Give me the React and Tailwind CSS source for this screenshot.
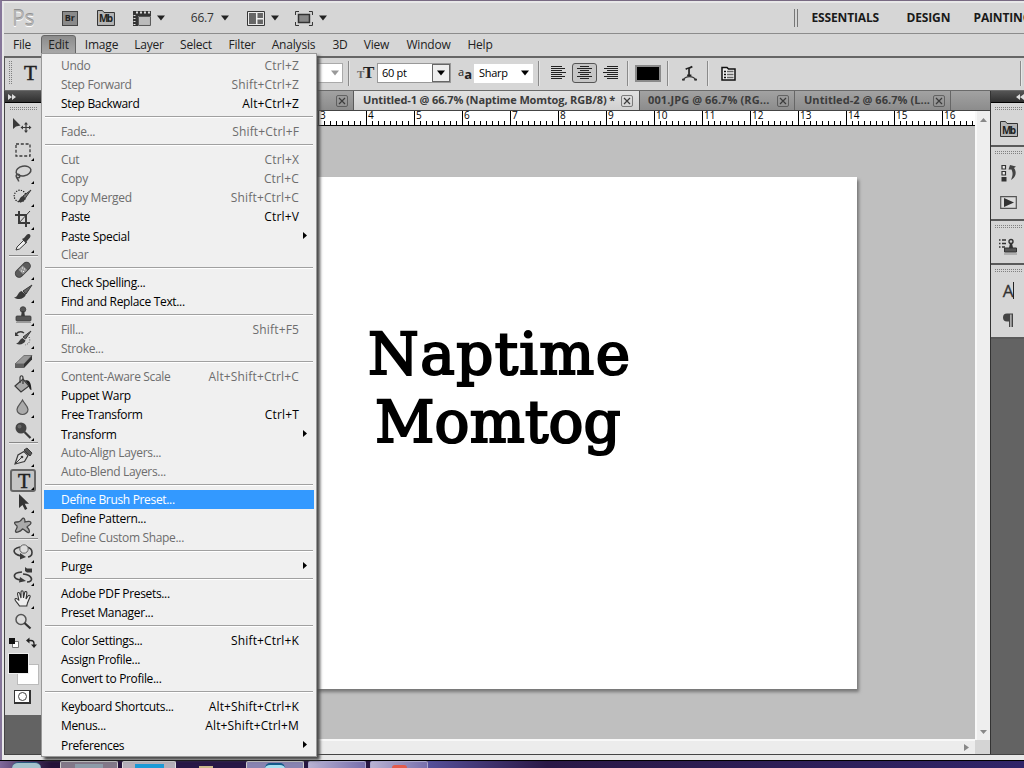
import React from "react";

// ==================== DATA ====================
const MENU_BAR = [
  { label: "File", pos: "w-[30px] mr-[4px]" },
  { label: "Edit", pos: "w-[35px] mr-[4px]", open: true },
  { label: "Image", pos: "w-[43px] mr-[4px]" },
  { label: "Layer", pos: "w-[44px] mr-[4px]" },
  { label: "Select", pos: "w-[42px] mr-[4px]" },
  { label: "Filter", pos: "w-[42px] mr-[4px]" },
  { label: "Analysis", pos: "w-[53px] mr-[4px]" },
  { label: "3D", pos: "w-[32px] mr-[4px]" },
  { label: "View", pos: "w-[33px] mr-[4px]" },
  { label: "Window", pos: "w-[63px] mr-[4px]" },
  { label: "Help", pos: "w-[32px]" },
];

const EDIT_MENU = [
  [
    { label: "Undo", keys: "Ctrl+Z", off: true },
    { label: "Step Forward", keys: "Shift+Ctrl+Z", off: true },
    { label: "Step Backward", keys: "Alt+Ctrl+Z" },
  ],
  [{ label: "Fade...", keys: "Shift+Ctrl+F", off: true }],
  [
    { label: "Cut", keys: "Ctrl+X", off: true },
    { label: "Copy", keys: "Ctrl+C", off: true },
    { label: "Copy Merged", keys: "Shift+Ctrl+C", off: true },
    { label: "Paste", keys: "Ctrl+V" },
    { label: "Paste Special", sub: true },
    { label: "Clear", off: true },
  ],
  [{ label: "Check Spelling..." }, { label: "Find and Replace Text..." }],
  [
    { label: "Fill...", keys: "Shift+F5", off: true },
    { label: "Stroke...", off: true },
  ],
  [
    { label: "Content-Aware Scale", keys: "Alt+Shift+Ctrl+C", off: true },
    { label: "Puppet Warp" },
    { label: "Free Transform", keys: "Ctrl+T" },
    { label: "Transform", sub: true },
    { label: "Auto-Align Layers...", off: true },
    { label: "Auto-Blend Layers...", off: true },
  ],
  [
    { label: "Define Brush Preset...", active: true },
    { label: "Define Pattern..." },
    { label: "Define Custom Shape...", off: true },
  ],
  [{ label: "Purge", sub: true }],
  [{ label: "Adobe PDF Presets..." }, { label: "Preset Manager..." }],
  [
    { label: "Color Settings...", keys: "Shift+Ctrl+K" },
    { label: "Assign Profile..." },
    { label: "Convert to Profile..." },
  ],
  [
    { label: "Keyboard Shortcuts...", keys: "Alt+Shift+Ctrl+K" },
    { label: "Menus...", keys: "Alt+Shift+Ctrl+M" },
    { label: "Preferences", sub: true },
  ],
];

const RULER = [3, 4, 5, 6, 7, 8, 9, 10, 11, 12, 13, 14, 15, 16];

// ==================== TOOL ICONS ====================
const D = "#3a3a3a";

const ICONS = {
  move: (
    <>
      <path d="M1 1v11l3-2.500 4.500-1z" fill={D} />
      <path d="M14 6.500v8M10 10.500h8" stroke={D} strokeWidth="1.200" />
      <path d="M14 5l2 2.500h-4zM14 16l2-2.500h-4zM8.500 10.500l2.500-2v4zM19.500 10.500l-2.500-2v4z" fill={D} />
    </>
  ),
  marquee: <rect x="4" y="4" width="14" height="12" fill="none" stroke={D} strokeWidth="1.300" strokeDasharray="3 1.800" />,
  lasso: (
    <g fill="none" stroke="#4a4a4a" strokeWidth="1.500">
      <ellipse cx="11.500" cy="8" rx="7.500" ry="4.800" transform="rotate(-12 11.500 8)" />
      <circle cx="6" cy="13" r="1.800" />
      <path d="M5 14.500c0 2 2 2 1.500 4" />
    </g>
  ),
  quick: (
    <>
      <circle cx="8" cy="10" r="5.800" fill="none" stroke="#111" strokeWidth="1.200" strokeDasharray="1.200 1.300" />
      <path d="M19 4l-8 6 2 2.500z" fill="#777" stroke={D} />
      <path d="M5 15.500c3-.5 2-4 5.500-5.500l3 2.500c-1 3.500-5 4.500-8.500 3z" fill={D} />
    </>
  ),
  crop: (
    <g fill="none" stroke={D} strokeWidth="2">
      <path d="M7 2v12h11M3 6h11v12" />
      <path d="M6 15L18 2" strokeWidth="1" />
    </g>
  ),
  dropper: (
    <>
      <path d="M4 18l1-3 7-7 2.500 2.500-7 6.500z" fill="#eee" stroke={D} />
      <path d="M10 7l2-1 3-3.500c2-1.500 4.500.5 3 3L15 9l-1 2.500z" fill={D} />
    </>
  ),
  heal: (
    <>
      <rect x="2" y="7" width="18" height="7.500" rx="3.700" fill="#5c5c5c" stroke="#444" transform="rotate(-45 11 11)" />
      <rect x="8" y="7.500" width="6" height="6.500" fill="#999" transform="rotate(-45 11 11)" />
      <path d="M10 9h1M12 10h1M9 12h1M11 12.500h1" stroke="#eee" />
    </>
  ),
  brush: (
    <>
      <path d="M20 3l-9 6 3 3z" fill="#666" stroke={D} />
      <path d="M2 15.500c4 0 3-4.500 7.500-6.500l4.500 3.500c-2 4.500-7 6-12 3z" fill={D} />
    </>
  ),
  stamp: (
    <>
      <circle cx="11" cy="4.500" r="2.800" fill="#555" stroke={D} strokeWidth=".8" />
      <path d="M9.800 6h2.400l.8 6h-4z" fill={D} />
      <rect x="4" y="11" width="15" height="5" rx="1" fill="#555" stroke={D} strokeWidth=".8" />
      <path d="M4 17.500h15" stroke="#999" />
    </>
  ),
  history: (
    <>
      <path d="M19 3l-8 6 2.500 2z" fill="#666" stroke={D} />
      <path d="M4 15.500c3 0 3-4 6.500-5.500l3 2.500c-1 3.500-6 5-9.500 3z" fill={D} />
      <path d="M4 6c3-3 5-3 8-1" fill="none" stroke={D} strokeWidth="1.500" />
      <path d="M3 4v4h4z" fill={D} />
      <path d="M17 9c2 4 0 7-4 8" fill="none" stroke="#555" strokeDasharray="1 1.500" />
    </>
  ),
  eraser: (
    <>
      <path d="M3 13L12 4.500h8L12 13z" fill="#999" stroke="#555" strokeWidth=".7" />
      <path d="M12 13l8-8.500v4L12 17z" fill="#333" />
      <path d="M3 13h9v4H3z" fill="#606060" />
    </>
  ),
  bucket: (
    <>
      <path d="M3 12l8-7 6 7-8 6z" fill="#aaa" stroke={D} strokeWidth="1.200" />
      <path d="M8 9V4c0-3 3-3 3 0v6" fill="none" stroke={D} strokeWidth="1.200" />
      <path d="M13 6c5 0 6 3 6.500 10-2 0-2.500-3-3-5z" fill="#222" />
    </>
  ),
  blur: <path d="M10.500 3c2 4 5.500 6 5.500 9.500a5.500 5 0 0 1-11 0C5 9 8.500 7 10.500 3z" fill="#aaa" stroke="#555" strokeWidth="1.200" />,
  dodge: (
    <>
      <circle cx="9" cy="8" r="5.500" fill="#444" />
      <circle cx="7.500" cy="6.500" r="2" fill="#666" />
      <path d="M12.500 12l6 6" stroke={D} strokeWidth="2.200" />
    </>
  ),
  pen: (
    <>
      <path d="M3 18l3-9 6-3.500 4 4-3.500 6z" fill="#ddd" stroke={D} strokeWidth="1.200" />
      <path d="M3.500 17.500l6-6" stroke={D} />
      <circle cx="10" cy="11" r="1.300" fill={D} />
      <path d="M12 4l3-2 5 5-2 3z" fill="#555" stroke={D} />
    </>
  ),
  arrow: <path d="M7 2v14l3.500-3 2.500 5 2.300-1.200-2.500-5H17z" fill="#333" />,
  shape: (
    <path
      d="M10 4c2-2 3 0 3 3 3-1 6-1 6 1s-4 3-4 4c3 3 3 6 1 5.500S12 14 10.500 14C8 17 4 18 3.500 16.500S6 13 5 11c-3-2-3-4-1-4s4 .5 6-3z"
      fill="#aaa"
      stroke="#444"
      strokeWidth="1.300"
    />
  ),
  rotate: (
    <>
      <path d="M8 5c-9 2-7 7 1 9m6-9c7 2 6 9 1 10" fill="none" stroke={D} strokeWidth="1.600" />
      <path d="M8 11l6 4-6 2.500z" fill={D} />
      <circle cx="12" cy="7" r="4.200" fill="#ddd" stroke="#666" />
    </>
  ),
  camera: (
    <>
      <path d="M10 7C-1 8 1 14 9 15m2-6c10 1 11 8 4 8" fill="none" stroke={D} strokeWidth="1.700" />
      <path d="M8 12l6 4-7 1.500z" fill={D} />
      <path d="M13 2l2 1.500h5v4h-5L13 6z" fill={D} />
    </>
  ),
  hand: (
    <path
      d="M7.500 18C6 15 3 13 3 11.500s2-1.500 4 1L5.500 6c0-2 2-2 2.300-.3L9 10V4c.2-1.700 2-1.700 2.200 0l.3 6 1.200-5.500c.5-1.700 2.300-1.200 2.200.5L14 11l2-3c1-1.500 2.800-.5 2 1l-2.500 6c-.3 1.500-.7 2-.7 3z"
      fill="#eee"
      stroke="#333"
      strokeWidth="1.100"
    />
  ),
  zoom: (
    <>
      <circle cx="9" cy="8.500" r="5" fill="#ddd" stroke="#555" strokeWidth="1.500" />
      <path d="M12.500 12l6 5.500" stroke="#333" strokeWidth="2.200" />
    </>
  ),
};

const TOOL_GROUPS = [
  ["move", "marquee", "lasso", "quick", "crop", "dropper"],
  ["heal", "brush", "stamp", "history", "eraser", "bucket", "blur", "dodge"],
  ["pen", "type", "arrow", "shape"],
  ["rotate", "camera", "hand", "zoom"],
];

// ==================== SMALL PARTS ====================
const Caret = ({ className = "text-[#222]" }) => (
  <svg className={className} width="8" height="6" viewBox="0 0 8 6">
    <path d="M0 0.500h8L4 5.500z" fill="currentColor" />
  </svg>
);

const VLine = ({ className = "" }) => (
  <div className={`h-[25px] w-[2px] shrink-0 border-l border-[#8a8a8a] bg-[#e6e6e6] ${className}`} />
);

const Grip = ({ className = "" }) => (
  <div
    className={`h-[4px] bg-[linear-gradient(transparent_1px,#d6d6d6_1px),linear-gradient(90deg,#808080_1px,transparent_1px)] bg-[length:2px_2px] ${className}`}
  />
);

const Corner = ({ className }) => (
  <svg className={`absolute ${className}`} width="3" height="3" viewBox="0 0 3 3">
    <path d="M3 0v3H0z" fill="#000" />
  </svg>
);

const Tool = ({ name }) => {
  if (name === "type") {
    return (
      <div className="relative ml-[5px] flex h-[23px] w-[26px] items-center justify-center rounded-[3px] border-2 border-[#666] bg-[#c4c4c4] pl-[2px] font-['Liberation_Serif'] text-[20px] leading-none text-[#222] [-webkit-text-stroke:0.5px_#222]">
        T
        <Corner className="right-0 bottom-0" />
      </div>
    );
  }
  return (
    <div className="relative h-[23px] pl-[7px]">
      <svg width="22" height="22" viewBox="0 0 22 22">
        {ICONS[name]}
      </svg>
      {name !== "move" && name !== "zoom" && <Corner className="right-[8px] bottom-[2px]" />}
    </div>
  );
};

const AlignIcon = ({ rows }) => (
  <svg width="15" height="14" viewBox="0 0 15 14">
    {rows.map(([x, w], i) => (
      <rect key={i} x={x} y={i * 2} width={w} height="1" fill="#222" />
    ))}
  </svg>
);

const CloseBox = () => (
  <svg width="12" height="12" viewBox="0 0 12 12" className="shrink-0">
    <rect x=".5" y=".5" width="11" height="11" rx="1.500" fill="none" stroke="currentColor" opacity=".6" />
    <path d="M3 3l6 6M9 3l-6 6" stroke="currentColor" strokeWidth="1.200" />
  </svg>
);

const MbIcon = ({ className = "" }) => (
  <svg width="18" height="17" viewBox="0 0 18 17" className={className}>
    <path d="M.5 15.500V.5h5l1.500 2h10.500v13z" fill="#b5b5b5" stroke="#333" />
    <text x="9" y="12.500" fontSize="10" fontWeight="bold" textAnchor="middle" fontFamily="Open Sans, sans-serif" fill="#222" textLength="14">
      Mb
    </text>
  </svg>
);

// ==================== TOP BARS ====================
const AppBar = () => (
  <div className="flex h-[31px] items-center border-b border-[#8c8c8c] bg-[#d6d6d6]">
    <div className="ml-[8px] w-[50px] font-['Open_Sans'] text-[21px] leading-none tracking-[-0.2px] text-[#b4b4b4] [text-shadow:0_-1px_0_#909090,0_1px_0_#fff]">Ps</div>
    <div className="flex h-[15px] w-[16px] items-center justify-center border border-[#444] bg-[#8a8a8a] font-['Open_Sans'] text-[9px] font-bold text-[#222]">
      Br
    </div>
    <MbIcon className="ml-[19px]" />
    <svg className="ml-[18px]" width="19" height="15" viewBox="0 0 19 15">
      <path d="M0 0h18v5H5v10H0z" fill="#333" />
      <path d="M5.500 5.500h12v9h-12z" fill="#bbb" stroke="#555" />
      <path d="M3 1.500h15" stroke="#ddd" strokeWidth="2" strokeDasharray="2 2" />
      <path d="M1.500 4v11" stroke="#ddd" strokeWidth="2" strokeDasharray="1 2" />
    </svg>
    <Caret className="ml-[5px] text-[#222]" />
    <div className="ml-[26px] w-[30px] font-['Open_Sans'] text-[12px] tracking-[-0.2px] text-[#333]">66.7</div>
    <Caret />
    <svg className="ml-[18px]" width="18" height="15" viewBox="0 0 18 15">
      <path d="M.5.5h17v14H.5z" fill="#eee" stroke="#333" />
      <path d="M2 2h7v11H2zM10.500 2H16v5h-5.500zM10.500 8.500H16V13h-5.500z" fill="#666" />
    </svg>
    <Caret className="ml-[6px] text-[#222]" />
    <svg className="ml-[16px]" width="18" height="15" viewBox="0 0 18 15">
      <path d="M.5 4V.5H4M14 .5h3.500V4M17.500 11v3.500H14M4 14.500H.5V11" fill="none" stroke="#333" />
      <path d="M3.500 3.500h11v8h-11z" fill="#888" stroke="#333" strokeWidth="1.500" />
    </svg>
    <Caret className="ml-[6px] text-[#222]" />
    <div className="ml-[467px] h-[18px] w-[4px] border-x border-[#777]" />
    <div className="ml-[14px] flex w-[213px] overflow-hidden whitespace-nowrap font-['Open_Sans'] text-[12px] font-bold tracking-[-0.15px] text-[#1a1a1a]">
      <span className="w-[95px] shrink-0">ESSENTIALS</span>
      <span className="w-[67px] shrink-0">DESIGN</span>
      <span>PAINTING</span>
    </div>
  </div>
);

const MenuBar = () => (
  <div className="flex h-[22px] items-start bg-[#d6d6d6] pt-[1px] pl-[3px]">
    {MENU_BAR.map((m) => (
      <div
        key={m.label}
        className={`flex h-[19px] shrink-0 items-center justify-center rounded-t-[3px] font-['Open_Sans'] text-[12px] tracking-[-0.2px] text-[#222] ${m.pos} ${
          m.open ? "border border-[#666] bg-linear-to-b from-[#8c8c8c] to-[#a8a8a8]" : ""
        }`}
      >
        {m.label}
      </div>
    ))}
  </div>
);

const OptionsBar = () => (
  <div className="flex h-[35px] items-center border-t-2 border-b border-t-[#666] border-b-[#6a6a6a] border-l border-l-[#555] bg-[#d6d6d6] pb-[2px]">
    <div className="ml-[4px] h-[24px] w-[4px] bg-[linear-gradient(90deg,transparent_1px,#d6d6d6_1px),linear-gradient(#808080_1px,transparent_1px)] bg-[length:2px_2px]" />
    <div className="ml-[11px] w-[268px] font-['Liberation_Serif'] text-[21px] leading-none text-[#222] [-webkit-text-stroke:0.5px_#222]">T</div>
    <div className="ml-[5px] flex h-[20px] w-[46px] shrink-0 items-center justify-end border border-[#aaa] bg-white pr-[3px]">
      <Caret className="text-[#999]" />
    </div>
    <VLine className="ml-[5px]" />
    <div className="ml-[7px] flex w-[20px] shrink-0 items-baseline font-['Liberation_Serif'] font-bold text-[#222]">
      <span className="w-[6px] text-[11px] text-[#666]">T</span>
      <span className="text-[17px] leading-none">T</span>
    </div>
    <div className="flex h-[20px] w-[74px] shrink-0 items-center border border-[#999] bg-white pl-[4px] font-['Open_Sans'] text-[11px] tracking-[-0.3px] text-black">
      60 pt
      <div className="ml-auto flex h-[18px] w-[18px] items-center justify-center border border-[#666] bg-[#eee]">
        <Caret className="text-black" />
      </div>
    </div>
    <div className="ml-[7px] flex w-[16px] items-end font-['Open_Sans'] leading-none text-[#222]">
      <span className="pb-[4px] text-[11px]">a</span>
      <span className="text-[13px] font-bold">a</span>
    </div>
    <div className="flex h-[19px] w-[59px] shrink-0 items-center justify-between bg-white pr-[4px] pl-[5px] font-['Open_Sans'] text-[11px] tracking-[-0.3px] text-black">
      Sharp
      <Caret className="text-black" />
    </div>
    <VLine className="ml-[5px]" />
    <div className="ml-[9px] flex w-[79px] items-center pl-[2px]">
      <AlignIcon rows={[[0, 11], [0, 14], [0, 11], [0, 15], [0, 11], [0, 14], [0, 11]]} />
      <div className="mx-[6px] flex h-[20px] w-[25px] shrink-0 items-center justify-center rounded-[3px] border border-[#555] bg-[#c6c6c6]">
        <AlignIcon rows={[[3, 9], [0, 15], [3, 9], [1, 13], [3, 9], [0, 15], [3, 9]]} />
      </div>
      <AlignIcon rows={[[4, 11], [1, 14], [4, 11], [0, 15], [4, 11], [1, 14], [4, 11]]} />
    </div>
    <VLine className="ml-[-1px]" />
    <div className="ml-[6px] h-[17px] w-[26px] shrink-0 border-2 border-[#8a8a8a] bg-black" />
    <VLine className="ml-[6px]" />
    <svg className="ml-[13px] shrink-0" width="15" height="17" viewBox="0 0 16 17">
      <path d="M4 4c2-2 3 0 7-3M7.500 3v7M5.500 10.500h4.500" fill="none" stroke="#222" strokeWidth="1.800" />
      <path d="M1 15.500c3-5 11-5 14 0" fill="none" stroke="#333" strokeWidth="1.300" />
      <path d="M0 14h3v2H0zM13 14h3v2h-3z" fill="#333" />
    </svg>
    <VLine className="ml-[10px]" />
    <svg className="ml-[12px] shrink-0" width="15" height="15" viewBox="0 0 15 15">
      <path d="M1 1.500h5l1.500 1.500H14v11H1z" fill="#eee" stroke="#111" strokeWidth="1.500" />
      <path d="M3 5.500h2M3 8.500h2M3 11.500h2" stroke="#111" strokeWidth="1.300" />
      <path d="M6 5.500h6.500M6 8.500h6.500M6 11.500h6.500" stroke="#666" strokeWidth="1.300" />
    </svg>
    <VLine className="ml-auto mr-[2px]" />
  </div>
);

// ==================== LEFT TOOLBOX ====================
const Toolbox = () => (
  <div className="flex w-[38px] shrink-0 flex-col border-l border-[#444] bg-[#636363]">
    <div className="flex h-[12px] items-center border-b border-black bg-linear-to-b from-[#555] to-[#303030] pl-[3px]">
      <svg width="8" height="6" viewBox="0 0 8 6">
        <path d="M0 0l4 3-4 3zM4 0l4 3-4 3z" fill="#ddd" />
      </svg>
    </div>
    <div className="flex h-[612px] flex-col bg-[#d6d6d6]">
      <Grip className="mt-[4px] mb-[6px] ml-[5px] w-[27px]" />
      {TOOL_GROUPS.map((group, i) => (
        <div key={i} className={i === 2 ? "mt-[-1px]" : ""}>
          {i > 0 && <div className="mx-[4px] mb-[2px] h-[2px] border-t border-[#888] bg-[#eee]" />}
          {group.map((name) => (
            <Tool key={name} name={name} />
          ))}
        </div>
      ))}
      <svg className="mt-[3px] ml-[3px]" width="30" height="12" viewBox="0 0 30 12">
        <path d="M4.500 4.500h6v6h-6z" fill="#fff" stroke="#777" />
        <path d="M1 1h6v6H1z" fill="#111" />
        <path d="M20 3.500h3q3 0 3 3v2" fill="none" stroke="#222" strokeWidth="1.300" />
        <path d="M18 3.500l3.500-3v6zM23 7.500h6l-3 3.500z" fill="#222" />
      </svg>
      <div className="mt-[4px] ml-[3px] grid h-[32px] w-[31px]">
        <div className="col-start-1 row-start-1 mt-[11px] ml-[9px] h-[21px] w-[22px] border border-[#bbb] bg-white" />
        <div className="z-10 col-start-1 row-start-1 h-[21px] w-[21px] border border-[#eee] bg-black" />
      </div>
      <div className="mt-[5px] ml-[9px] flex h-[14px] w-[17px] items-center justify-center border-2 border-t border-l border-[#333] bg-white">
        <div className="h-[9px] w-[9px] rounded-full border border-[#444]" />
      </div>
    </div>
  </div>
);

// ==================== DOCUMENT ====================
const TabStrip = () => (
  <div className="flex h-[20px] shrink-0 items-stretch whitespace-nowrap border-b border-[#444] bg-linear-to-b from-[#a2a2a2] to-[#8c8c8c] font-['Open_Sans'] text-[11px] font-bold text-[#3c3c3c]">
    <div className="flex w-[312px] items-center justify-end border-r border-[#5a5a5a] pr-[5px]">
      <CloseBox />
    </div>
    <div className="flex w-[285px] items-center justify-between bg-linear-to-b from-[#e2e2e2] to-[#d0d0d0] pr-[6px] pl-[9px] tracking-[-0.13px]">
      <span>Untitled-1 @ 66.7% (Naptime Momtog, RGB/8) *</span>
      <CloseBox />
    </div>
    <div className="flex w-[156px] items-center justify-between border-x border-r-[#666] border-l-[#555] pr-[5px] pl-[8px] tracking-[0.1px]">
      <span>001.JPG @ 66.7% (RG...</span>
      <CloseBox />
    </div>
    <div className="flex w-[156px] items-center justify-between border-r border-[#666] pr-[5px] pl-[9px] tracking-[0.05px]">
      <span>Untitled-2 @ 66.7% (L...</span>
      <CloseBox />
    </div>
  </div>
);

const Ruler = () => (
  <div className="flex h-[15px] shrink-0 border-b border-black bg-white pl-[276px]">
    {RULER.map((n) => (
      <div
        key={n}
        className="flex h-[14px] w-[48px] shrink-0 flex-col border-l border-black font-['Open_Sans'] text-[10px] leading-[9px] text-black last:w-[33px]"
      >
        <span className="h-[10px] pl-[1px]">{n}</span>
        <div className="-ml-px h-[4px] bg-[linear-gradient(90deg,#000_1px,transparent_1px)] bg-[length:6px_4px]" />
      </div>
    ))}
  </div>
);

const Document = () => (
  <div className="flex w-[948px] shrink-0 flex-col">
    <TabStrip />
    <div className="flex flex-1">
      <div className="flex w-[933px] flex-col">
        <Ruler />
        <div className="flex-1 bg-[#bfbfbf] pt-[51px] pl-[130px]">
          <div className="h-[512px] w-[685px] bg-white pt-[143px] pl-[195px] font-['DejaVu_Serif'] text-[58px] leading-[68px] whitespace-nowrap text-black shadow-[2px_3px_3px_#777] [-webkit-text-stroke:2.2px_#000]">
            <div className="ml-[1px] tracking-[1.4px]">Naptime</div>
            <div className="ml-[8px] tracking-[0.2px]">Momtog</div>
          </div>
        </div>
        <div className="flex h-[15px] items-center justify-end border-t-2 border-[#f8f8f8] bg-[#ececec] pr-[6px]">
          <svg width="5" height="7" viewBox="0 0 5 7">
            <path d="M0 0l5 3.500L0 7z" fill="#888" />
          </svg>
        </div>
      </div>
      <div className="flex w-[15px] flex-col bg-[#d4d4d4]">
        <div className="flex h-[629px] flex-col items-center justify-between border-l-2 border-[#f8f8f8] bg-[#eee] pt-[7px] pb-[6px]">
          <svg width="7" height="4" viewBox="0 0 7 4">
            <path d="M0 4l3.500-4L7 4z" fill="#888" />
          </svg>
          <svg width="7" height="4" viewBox="0 0 7 4">
            <path d="M0 0h7L3.500 4z" fill="#888" />
          </svg>
        </div>
      </div>
    </div>
  </div>
);

// ==================== RIGHT DOCK ====================
const DockGroup = ({ className, children }) => (
  <div className={`flex flex-col items-center border-b-2 border-[#5a5a5a] bg-[#d6d6d6] ${className}`}>
    <Grip className="mt-[4px] mr-[-2px] w-[28px] shrink-0" />
    {children}
  </div>
);

const Dock = () => (
  <div className="flex flex-1 flex-col border-l border-[#333] bg-[#636363]">
    <div className="flex h-[12px] items-center justify-end border-b border-black bg-linear-to-b from-[#555] to-[#303030]">
      <svg width="8" height="6" viewBox="0 0 8 6">
        <path d="M4 0L0 3l4 3zM8 0L4 3l4 3z" fill="#ddd" />
      </svg>
    </div>
    <DockGroup className="h-[44px]">
      <MbIcon className="mt-[10px] ml-[2px]" />
    </DockGroup>
    <DockGroup className="h-[74px]">
      <svg className="mt-[9px] ml-[2px]" width="16" height="19" viewBox="0 0 16 19">
        <path d="M1 1.500h3.500V5H1zM1 7.500h3.500V11H1z" fill="#eee" stroke="#333" strokeWidth="1.200" />
        <path d="M.5 13h5v4.500h-5z" fill="#333" />
        <path d="M7.500 5.500L9 1l6 1.500-2 1.500c3 4 2 9-3 12 2-5 2-7 .5-10.500z" fill="#444" />
      </svg>
      <svg className="mt-[13px] ml-[2px]" width="17" height="13" viewBox="0 0 17 13">
        <path d="M.7.7h15.600v11.600H.7z" fill="#ddd" stroke="#555" strokeWidth="1.200" />
        <path d="M4 2l10 4.500L4 11z" fill="#333" />
      </svg>
    </DockGroup>
    <DockGroup className="h-[44px]">
      <svg className="mt-[9px]" width="18" height="17" viewBox="0 0 18 17">
        <path d="M0 2h1.500M3 2h4M0 5.500h1.500M3 5.500h4M0 9h1.500M3 9h3" stroke="#333" strokeWidth="1.300" />
        <circle cx="12" cy="3.500" r="2" fill="#ccc" stroke="#333" strokeWidth="1.400" />
        <path d="M11 5h2l1 5h-4z" fill="#333" />
        <path d="M5.500 10h12v4h-12z" fill="#555" stroke="#333" />
        <path d="M5 16h13" stroke="#888" />
      </svg>
    </DockGroup>
    <DockGroup className="h-[74px]">
      <div className="mt-[5px] ml-[2px] flex h-[24px] items-center font-['Open_Sans'] text-[17px] leading-none text-[#333] [-webkit-text-stroke:0.3px_#333]">
        A<span className="h-[17px] w-px bg-[#222]" />
      </div>
      <svg className="mt-[11px]" width="12" height="15" viewBox="0 0 12 15">
        <path d="M11 .5H5a4 4 0 0 0 0 8h2V14h1.300V1.500h1.200V14H11z" fill="#444" />
      </svg>
    </DockGroup>
  </div>
);

// ==================== EDIT MENU ====================
const EditMenu = () => (
  <div className="absolute top-[53px] left-[41px] h-[704px] w-[276px] border border-[#999] bg-[#f0f0f0] px-[2px] pt-[2px] font-['Open_Sans'] text-[12px] text-black shadow-[3px_3px_3px_#4a4a4a]">
    {EDIT_MENU.map((group, i) => (
      <div key={i}>
        {i > 0 && (
          <div className="h-[9px] px-px pt-[3px]">
            <div className="h-[2px] w-full border-t border-[#a0a0a0] bg-white" />
          </div>
        )}
        {group.map((item) => (
          <div
            key={item.label}
            className={`flex h-[19px] items-center justify-between pr-[15px] pl-[17px] whitespace-nowrap tracking-[-0.33px] ${
              item.active ? "bg-[#3399ff] text-white" : item.off ? "text-[#6d6d6d]" : ""
            } ${item.sub ? "pt-[2px]" : ""}`}
          >
            <span>{item.label}</span>
            {item.keys && <span className="tracking-[0.15px]">{item.keys}</span>}
            {item.sub && (
              <svg className="mr-[-8px] mb-[3px]" width="4" height="7" viewBox="0 0 4 7">
                <path d="M0 0l4 3.500L0 7z" fill="#000" />
              </svg>
            )}
          </div>
        ))}
      </div>
    ))}
  </div>
);

// ==================== TASKBAR ====================
const Taskbar = () => (
  <div className="flex h-[8px] items-end overflow-hidden border-t border-black bg-linear-to-r from-[#80689a] via-[#241238] via-5% to-[#2b2058]">
    <div className="ml-[12px] h-[6px] w-[29px] rounded-t-full border-t border-[#2a5a80] bg-[#a5c2cc]" />
    <div className="ml-[19px] flex h-[7px] w-[58px] items-end justify-center rounded-t-[2px] border border-b-0 border-[#ccc] bg-[#827888]">
      <div className="h-[4px] w-[28px] bg-[#8d9ba8]" />
    </div>
    <div className="ml-[4px] flex h-[7px] w-[54px] items-end justify-center rounded-t-[2px] border border-b-0 border-[#ddd] bg-[#b5afb9]">
      <div className="h-[4px] w-[29px] bg-[#1c9ad6]" />
    </div>
    <div className="flex h-[7px] w-[70px] items-end justify-center bg-[#281746]">
      <div className="ml-[-10px] h-[2px] w-[14px] bg-[#cbb98a]" />
    </div>
    <div className="flex h-[7px] w-[58px] items-end justify-center rounded-t-[2px] border border-b-0 border-[#ccc] bg-[#8883b0]">
      <div className="h-[5px] w-[20px] rounded-t-full border-t-2 border-[#155a8a] bg-[#a8e0f0]" />
    </div>
    <div className="ml-[4px] h-[7px] w-[58px] rounded-t-[2px] border border-b-0 border-[#aaa6cc] bg-linear-to-r from-[#b8b2d2] to-[#786fac]" />
    <div className="ml-[4px] flex h-[7px] w-[58px] items-end justify-center rounded-t-[2px] border border-b-0 border-[#aaa6cc] bg-linear-to-r from-[#b8b2d2] to-[#786fac]">
      <div className="h-[3px] w-[15px] rounded-t-full bg-[#e35b4c]" />
    </div>
    <div className="h-[7px] flex-1 bg-linear-to-r from-[#55509a] via-[#2a1846] via-20% to-[#302468]" />
  </div>
);

export default function App() {
  return (
    <div className="relative flex h-[768px] w-[1024px] flex-col overflow-hidden bg-[#d6d6d6]">
      <div className="flex h-[760px] flex-col border-t border-l-2 border-t-[#786a82] border-l-[#86769a] bg-[#e8e8e8]">
        <div className="mt-[2px] ml-[2px] flex flex-col">
          <AppBar />
          <MenuBar />
          <OptionsBar />
        </div>
        <div className="ml-[2px] flex h-[664px] border-b border-[#444]">
          <Toolbox />
          <Document />
          <Dock />
        </div>
      </div>
      <Taskbar />
      <EditMenu />
    </div>
  );
}
